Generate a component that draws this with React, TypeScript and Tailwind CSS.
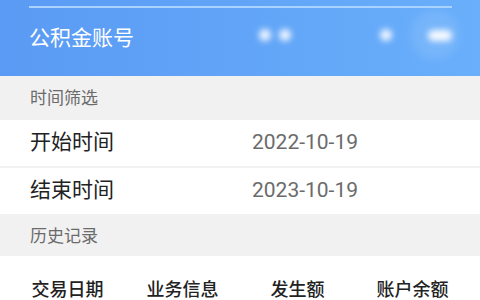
import React from 'react';

const rows = [
  { label: '开始时间', value: '2022-10-19' },
  { label: '结束时间', value: '2023-10-19' },
];

const columns = ['交易日期', '业务信息', '发生额', '账户余额'];

export default function App() {
  return (
    <div
      className="w-[480px] h-[300px] overflow-hidden bg-white"
      style={{ fontFamily: 'Roboto, "Noto Sans CJK SC", sans-serif' }}
    >
      {/* Account header */}
      <div className="relative h-[76px] bg-gradient-to-r from-[#5a9af4] to-[#69affb] px-[29px] pt-[6px] overflow-hidden">
        <div className="h-[2px] w-[423px] bg-[#a9d2ff]" />
        <div className="flex items-center h-[62px]">
          <span className="text-[21px] text-white">公积金账号</span>
        </div>
        {/* masked digits */}
        <div className="absolute top-[29px] left-[259px] w-[12px] h-[12px] rounded-full bg-white/90 blur-[3px]" />
        <div className="absolute top-[29px] left-[279px] w-[12px] h-[12px] rounded-full bg-white/90 blur-[3px]" />
        <div className="absolute top-[29px] left-[380px] w-[12px] h-[12px] rounded-full bg-white/90 blur-[3px]" />
        <div className="absolute top-[30px] left-[428px] w-[24px] h-[11px] rounded-full bg-white/95 blur-[3px]" />
        <div className="absolute top-[10px] left-[410px] w-[50px] h-[50px] rounded-full bg-white/10 blur-[4px]" />
      </div>

      {/* Time filter */}
      <div className="h-[44px] bg-[#f1f1f1] px-[30px] flex items-center">
        <span className="text-[17px] text-[#6b6b6b] pt-[1px]">时间筛选</span>
      </div>
      {rows.map((r, i) => (
        <div key={r.label}>
          {i > 0 && <div className="h-[2px] bg-[#f1f1f1]" />}
          <div className="h-[46px] flex items-center px-[30px]">
            <span className="w-[222px] text-[21px] text-[#222]">{r.label}</span>
            <span className="text-[21px] text-[#6b6b6b]">{r.value}</span>
          </div>
        </div>
      ))}

      {/* History */}
      <div className="h-[42px] bg-[#f1f1f1] px-[30px] flex items-center">
        <span className="text-[17px] text-[#6b6b6b] pt-[4px]">历史记录</span>
      </div>
      <div className="grid grid-cols-4 px-[10px] pt-[20px]">
        {columns.map((c) => (
          <div key={c} className="text-center text-[18px] font-medium text-[#222]">
            {c}
          </div>
        ))}
      </div>
    </div>
  );
}
